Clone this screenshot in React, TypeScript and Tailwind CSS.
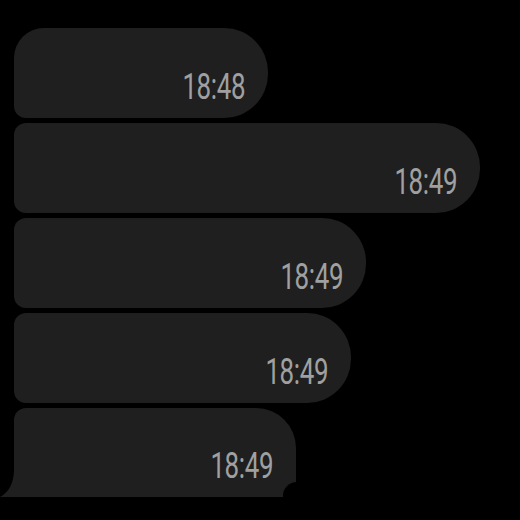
const bubbles = [
  { w: "w-[254px]", time: "18:48", shape: "rounded-tl-[30px] rounded-bl-[12px] rounded-r-[44px]" },
  { w: "w-[466px]", time: "18:49", shape: "rounded-l-[12px] rounded-r-[44px]" },
  { w: "w-[352px]", time: "18:49", shape: "rounded-l-[12px] rounded-r-[44px]" },
  { w: "w-[337px]", time: "18:49", shape: "rounded-l-[12px] rounded-r-[44px]" },
];

const Time = ({ t }: { t: string }) => (
  <span className="origin-right scale-x-[0.72] text-[36px] font-normal leading-none tracking-[-0.5px] text-[#a0a0a0] [font-family:Roboto,'Noto_Sans',sans-serif]">
    {t}
  </span>
);

export default function App() {
  return (
    <div className="h-[520px] w-[520px] overflow-hidden bg-black pl-[14px] pt-[28px]">
      <div className="flex flex-col gap-[5px]">
        {bubbles.map((b, i) => (
          <div
            key={i}
            className={`${b.w} ${b.shape} flex h-[90px] items-end justify-end bg-[#1f1f1f] pb-[13px] pr-[23px]`}
          >
            <Time t={b.time} />
          </div>
        ))}
        <div className="relative flex h-[89px] w-[282px] items-end justify-end rounded-tl-[12px] rounded-bl-none rounded-r-[40px] rounded-br-[12px] bg-[#1f1f1f] pb-[13px] pr-[23px]">
          <svg
            className="absolute bottom-0 left-[-14px]"
            width="14"
            height="28"
            viewBox="0 0 14 28"
          >
            <path d="M14 0 C14 14 9 23 0 28 L14 28 Z" fill="#1f1f1f" />
          </svg>
          <div className="absolute bottom-[-13px] right-[-15px] h-[28px] w-[28px] rounded-full bg-black" />
          <Time t="18:49" />
        </div>
      </div>
    </div>
  );
}
